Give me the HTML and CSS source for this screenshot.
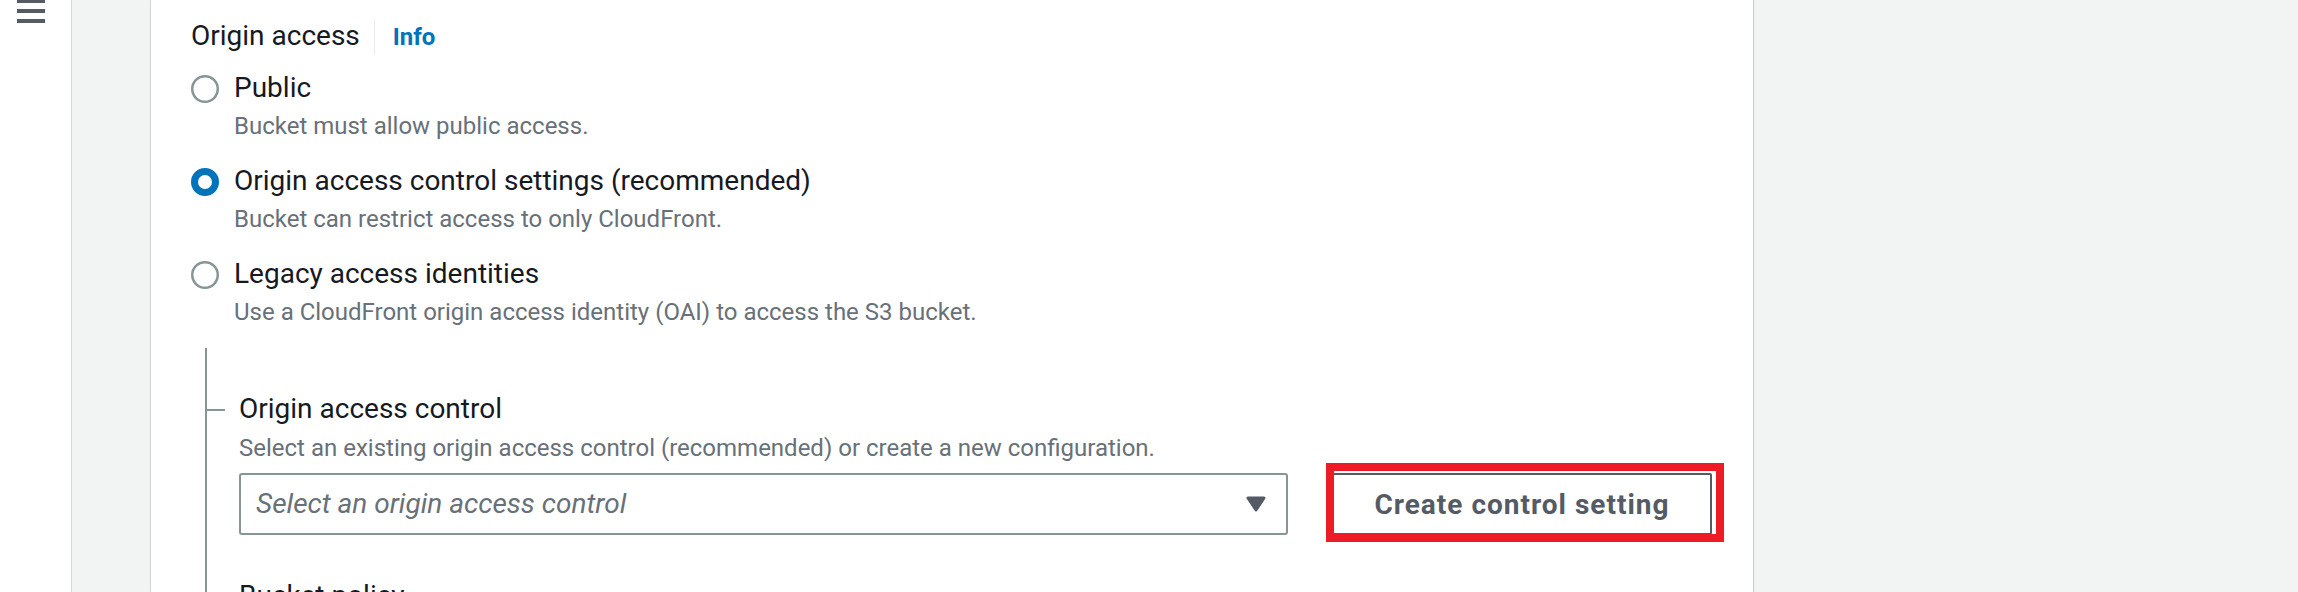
FILE: index.html
```html
<!DOCTYPE html>
<html lang="en">
<head>
<meta charset="utf-8">
<title>Origin access</title>
<link rel="stylesheet" href="styles.css">
</head>
<body>
<div class="page">
  <nav class="nav">
    <svg class="menu" viewBox="0 0 28 24" width="28" height="24" aria-hidden="true">
      <rect x="0" y="0" width="28" height="4" fill="#545b64"/>
      <rect x="0" y="10" width="28" height="4" fill="#545b64"/>
      <rect x="0" y="20" width="28" height="4" fill="#545b64"/>
    </svg>
  </nav>
  <div class="gutter"></div>
  <main class="card">
    <div class="label-row">
      <span class="label">Origin access</span>
      <span class="divider"></span>
      <a class="info">Info</a>
    </div>
    <div class="radios">
      <div class="radio">
        <svg class="radio-icon" viewBox="0 0 28 28" aria-hidden="true"><circle cx="14" cy="14" r="12.75" fill="#fff" stroke="#879596" stroke-width="2.5"/></svg>
        <div class="radio-text">
          <div class="radio-title">Public</div>
          <div class="radio-desc">Bucket must allow public access.</div>
        </div>
      </div>
      <div class="radio">
        <svg class="radio-icon" viewBox="0 0 28 28" aria-hidden="true"><circle cx="14" cy="14" r="10.5" fill="#fff" stroke="#0073bb" stroke-width="7"/></svg>
        <div class="radio-text">
          <div class="radio-title">Origin access control settings (recommended)</div>
          <div class="radio-desc">Bucket can restrict access to only CloudFront.</div>
        </div>
      </div>
      <div class="radio">
        <svg class="radio-icon" viewBox="0 0 28 28" aria-hidden="true"><circle cx="14" cy="14" r="12.75" fill="#fff" stroke="#879596" stroke-width="2.5"/></svg>
        <div class="radio-text">
          <div class="radio-title">Legacy access identities</div>
          <div class="radio-desc">Use a CloudFront origin access identity (OAI) to access the S3 bucket.</div>
        </div>
      </div>
    </div>
    <div class="tree">
      <div class="tree-item">
        <div class="tree-title">Origin access control</div>
        <div class="tree-desc">Select an existing origin access control (recommended) or create a new configuration.</div>
        <div class="control-row">
          <div class="select">
            <span class="placeholder">Select an origin access control</span>
            <svg class="caret" viewBox="0 0 20 16" width="20" height="16" aria-hidden="true"><polygon points="2,2 18,2 10,14" fill="#545b64" stroke="#545b64" stroke-width="3" stroke-linejoin="round"/></svg>
          </div>
          <div class="btn-wrap"><button class="btn">Create control setting</button></div>
        </div>
      </div>
      <div class="tree-item next">
        <div class="tree-title">Bucket policy</div>
        <div class="tree-desc">Policy must allow access to CloudFront IAM service principal role.</div>
      </div>
    </div>
  </main>
  <div class="rest"></div>
</div>
</body>
</html>
```

FILE: styles.css
```css
html, body {
  margin: 0;
  padding: 0;
}

body {
  font-family: Roboto, "Liberation Sans", sans-serif;
  color: #16191f;
  background: #f2f3f3;
  overflow: hidden;
}

.page {
  display: flex;
  height: 592px;
  overflow: hidden;
}

.nav {
  flex: 0 0 71px;
  background: #fff;
  border-right: 1px solid #d5dbdb;
}

.menu {
  display: block;
  margin: -1px 0 0 17px;
}

.gutter {
  flex: 0 0 78px;
  background: #f2f3f3;
}

.card {
  flex: 0 0 1604px;
  box-sizing: border-box;
  background: #fff;
  border-left: 1px solid #d0d5d5;
  border-right: 1px solid #c6cccc;
  box-shadow: 1px 0 2px rgba(0, 28, 36, 0.15);
  padding: 16px 0 0 40px;
  overflow: hidden;
}

.rest {
  flex: 1;
  background: #f2f3f3;
}

.label-row {
  display: flex;
  align-items: baseline;
  height: 40px;
}

.label {
  font-size: 28px;
  line-height: 40px;
  color: #16191f;
}

.divider {
  align-self: center;
  width: 1px;
  height: 35px;
  background: #e9ebed;
  margin: 0 18px 0 14px;
}

.info {
  font-size: 24px;
  font-weight: 700;
  color: #0073bb;
  line-height: 40px;
}

.radios {
  margin-top: 12px;
  display: flex;
  flex-direction: column;
  gap: 19px;
}

.radio {
  display: flex;
  align-items: flex-start;
  gap: 15px;
}

.radio-icon {
  flex: none;
  width: 28px;
  height: 28px;
  margin-top: 7px;
}

.radio-title {
  font-size: 28px;
  line-height: 40px;
  color: #16191f;
}

.radio-desc {
  font-size: 24px;
  line-height: 32px;
  color: #687078;
  margin-top: 2px;
}

.tree {
  margin: 20px 0 0 14px;
  border-left: 2px solid #879596;
  padding: 41px 0 0 32px;
}

.tree-title {
  position: relative;
  font-size: 28px;
  line-height: 40px;
  color: #16191f;
}

.tree-title::before {
  content: "";
  position: absolute;
  left: -34px;
  top: 20px;
  width: 20px;
  height: 2px;
  background: #879596;
}

.tree-desc {
  font-size: 24px;
  line-height: 32px;
  color: #687078;
  margin-top: 3px;
}

.control-row {
  display: grid;
  grid-template-columns: 1049px 380px;
  column-gap: 44px;
  margin-top: 9px;
}

.select {
  height: 62px;
  box-sizing: border-box;
  border: 2px solid #879596;
  border-radius: 3px;
  display: flex;
  align-items: center;
  justify-content: space-between;
  padding: 0 20px 0 15px;
}

.placeholder {
  font-size: 28px;
  line-height: 40px;
  font-style: italic;
  color: #687078;
}

.caret {
  display: block;
  flex: none;
}

.btn-wrap {
  position: relative;
}

.btn-wrap::after {
  content: "";
  position: absolute;
  left: -6px;
  right: -12px;
  top: -10px;
  bottom: -7px;
  border: 8px solid #ed1c24;
  pointer-events: none;
}

.btn {
  display: block;
  width: 380px;
  height: 62px;
  box-sizing: border-box;
  border: 2px solid #545b64;
  border-radius: 2px;
  background: #fff;
  color: #545b64;
  font-family: Roboto, "Liberation Sans", sans-serif;
  font-size: 28px;
  font-weight: 700;
  letter-spacing: 1px;
  padding: 0;
}

.tree-item.next {
  margin-top: 41px;
  padding-bottom: 200px;
}
```
